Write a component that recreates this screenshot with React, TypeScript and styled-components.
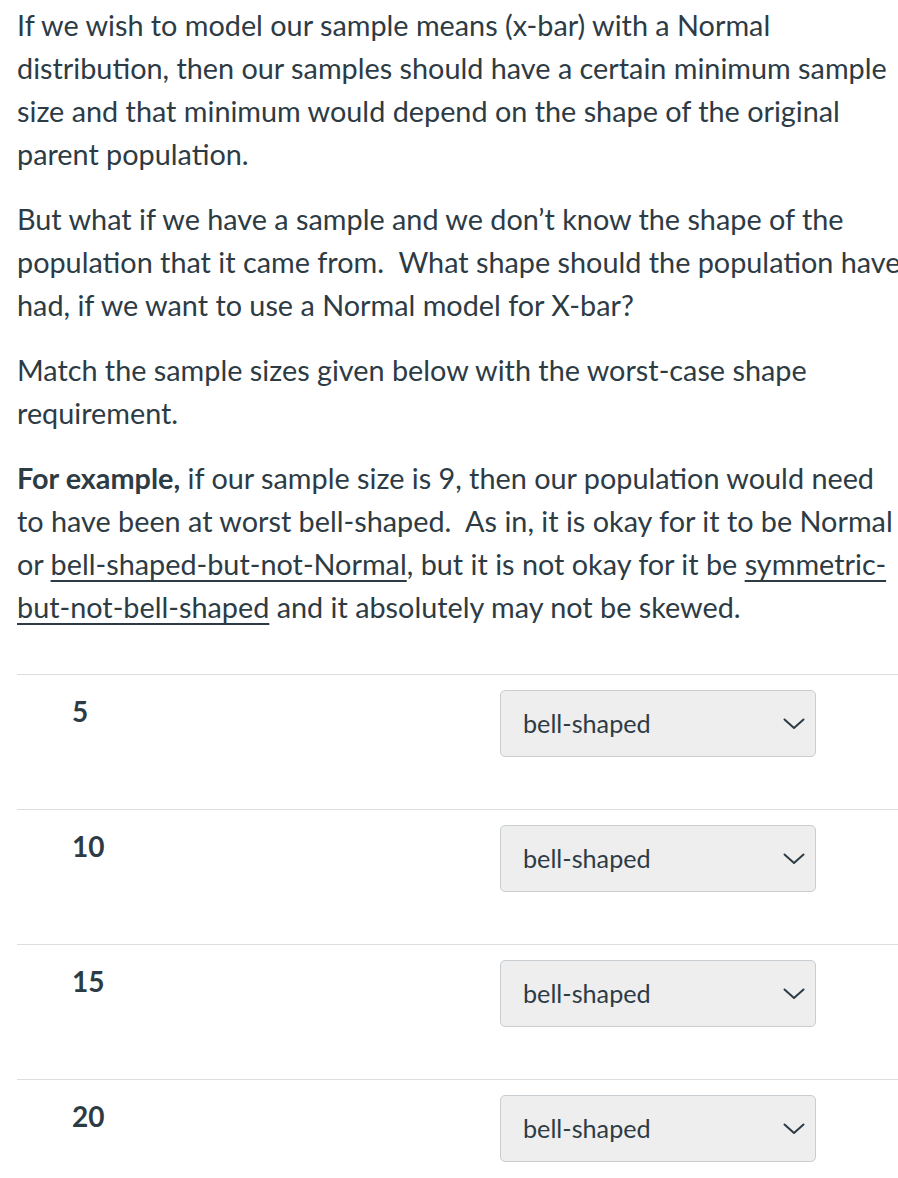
import React from "react";
import styled, { createGlobalStyle } from "styled-components";

const Global = createGlobalStyle`
  html, body { margin: 0; padding: 0; background: #ffffff; overflow-x: hidden; }
  body { font-family: Lato, "Open Sans", "Liberation Sans", sans-serif; color: #2d3b45; }
`;

const Page = styled.div`
  width: 890px;
  padding: 4px 0 0 17px;
  font-size: 28.8px;
  line-height: 43px;
`;

const Para = styled.p`
  margin: 0 0 22px 0;
`;

const U = styled.span`
  text-decoration: underline;
  text-underline-offset: 5px;
  text-decoration-thickness: 2px;
`;

const List = styled.div`
  margin-top: 45px;
  width: 900px;
`;

const Row = styled.div`
  display: flex;
  align-items: flex-start;
  border-top: 1px solid #dddddd;
  padding: 15px 0 52px 55px;
`;

const Label = styled.div`
  width: 428px;
  font-weight: 700;
  font-size: 28px;
  line-height: 43px;
`;

const SelectBox = styled.div`
  box-sizing: border-box;
  width: 316px;
  height: 67px;
  display: flex;
  align-items: center;
  justify-content: space-between;
  padding: 0 10px 0 22px;
  background: #eeeeee;
  border: 1px solid #c7cdd1;
  border-radius: 5px;
  font-size: 25.2px;
  color: #2d3b45;
`;

const Chevron = () => (
  <svg width="22" height="12" viewBox="0 0 22 12" fill="none">
    <path d="M1.5 1.5 L11 10 L20.5 1.5" stroke="#2d3b45" strokeWidth="2" strokeLinecap="round" strokeLinejoin="round" />
  </svg>
);

const rows = ["5", "10", "15", "20"];

export default function App() {
  return (
    <>
      <Global />
      <Page>
        <Para>
          If we wish to model our sample means (x-bar) with a Normal distribution, then our samples should have a certain minimum sample size and that minimum would depend on the shape of the original parent population.
        </Para>
        <Para>
          But what if we have a sample and we don’t know the shape of the population that it came from.{"\u00a0 "}What shape should the population have had, if we want to use a Normal model for X-bar?
        </Para>
        <Para>Match the sample sizes given below with the worst-case shape requirement.</Para>
        <Para>
          <strong>For example,</strong> if our sample size is 9, then our population would need to have been at worst bell-shaped.{"\u00a0 "}As in, it is okay for it to be Normal or <U>bell-shaped-but-not-Normal</U>, but it is not okay for it be <U>symmetric-but-not-bell-shaped</U> and it absolutely may not be skewed.
        </Para>
        <List>
          {rows.map((r) => (
            <Row key={r}>
              <Label>{r}</Label>
              <SelectBox>
                <span>bell-shaped</span>
                <Chevron />
              </SelectBox>
            </Row>
          ))}
        </List>
      </Page>
    </>
  );
}
